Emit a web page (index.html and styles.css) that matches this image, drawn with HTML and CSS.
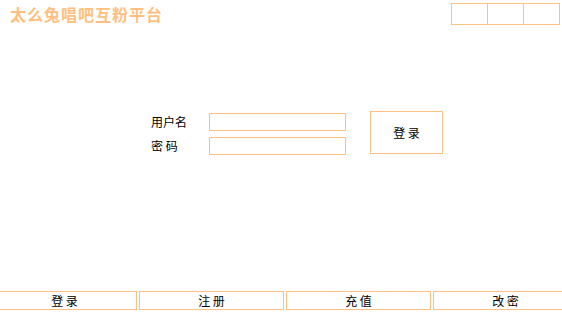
FILE: index.html
```html
<!DOCTYPE html>
<html lang="zh-CN">
<head>
<meta charset="utf-8">
<title>太么兔唱吧互粉平台</title>
<link rel="stylesheet" href="styles.css">
</head>
<body>
<div class="page">
  <header class="header">
    <div class="title">太么兔唱吧互粉平台</div>
    <div class="tabs">
      <div class="tab"></div>
      <div class="tab"></div>
      <div class="tab"></div>
    </div>
  </header>
  <main class="main">
    <div class="login">
      <div class="labels">
        <div class="label">用户名</div>
        <div class="label">密 码</div>
      </div>
      <div class="inputs">
        <input class="field" type="text">
        <input class="field" type="password">
      </div>
      <button class="login-btn">登 录</button>
    </div>
  </main>
  <footer class="footer">
    <div class="fbtn">登 录</div>
    <div class="fbtn">注 册</div>
    <div class="fbtn">充 值</div>
    <div class="fbtn">改 密</div>
  </footer>
</div>
</body>
</html>
```
FILE: styles.css
```css
html, body {
  margin: 0;
  padding: 0;
  background: #ffffff;
}
.page {
  width: 562px;
  height: 322px;
  overflow: hidden;
  display: flex;
  flex-direction: column;
  font-family: "Noto Sans CJK SC", "Noto Sans", sans-serif;
  font-size: 12px;
  color: #000000;
}
.header {
  display: flex;
  justify-content: space-between;
  align-items: flex-start;
  padding: 3px 2px 0 10px;
  height: 22px;
}
.title {
  margin-top: 3px;
  font-size: 16px;
  line-height: 16px;
  font-weight: bold;
  letter-spacing: 1px;
  color: #ffbf80;
}
.tabs {
  display: flex;
  border: 1px solid #ffbf80;
  height: 20px;
}
.tab {
  width: 35px;
  height: 20px;
}
.tab + .tab {
  border-left: 1px solid #ffbf80;
}
.main {
  flex: 1;
  padding: 86px 0 0 151px;
}
.login {
  display: flex;
  align-items: flex-start;
}
.labels {
  width: 58px;
  margin-top: 2px;
  display: flex;
  flex-direction: column;
  gap: 6px;
}
.label {
  height: 18px;
  line-height: 18px;
  font-size: 12px;
}
.inputs {
  margin-top: 2px;
  display: flex;
  flex-direction: column;
  gap: 6px;
}
.field {
  box-sizing: border-box;
  width: 137px;
  height: 18px;
  margin: 0;
  padding: 0 2px;
  border: 1px solid #ffbf80;
  background: #ffffff;
  outline: none;
  font: inherit;
}
.login-btn {
  box-sizing: border-box;
  width: 73px;
  height: 43px;
  margin: 0 0 0 24px;
  padding: 0;
  border: 1px solid #ffbf80;
  background: #ffffff;
  font-family: inherit;
  font-size: 12px;
  color: #000000;
}
.footer {
  display: flex;
  gap: 2px;
  margin: 0 0 12px -8px;
  height: 19px;
}
.fbtn {
  box-sizing: border-box;
  flex: none;
  width: 145px;
  height: 19px;
  border: 1px solid #ffbf80;
  line-height: 17px;
  text-align: center;
  font-size: 12px;
}
```
